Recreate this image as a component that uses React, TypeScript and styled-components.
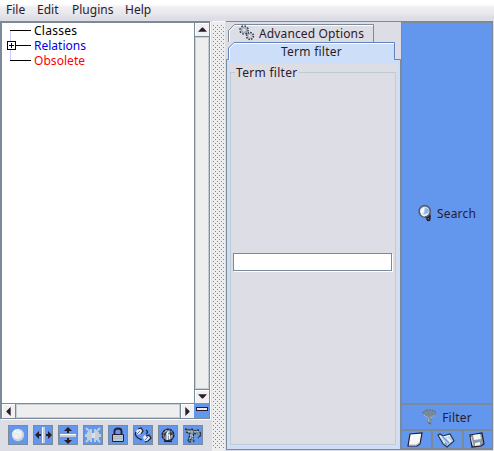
import React from "react";
import styled, { createGlobalStyle } from "styled-components";

const EDGE = "#7a8a99";
const BLUE = "#6396ed";
const INK = "#2b1b2b";
const PANEL = "#dddde6";

const Global = createGlobalStyle`
  *{box-sizing:border-box}
  body{margin:0;background:${PANEL};overflow:hidden;font:12px/15px "Noto Sans",sans-serif;color:${INK}}
  svg{display:block;flex:none}
`;
const Window = styled.div`
  width:494px;height:451px;display:flex;flex-direction:column;background:${PANEL};
`;
const MenuBar = styled.nav`
  height:21px;flex:none;display:flex;padding:2px 6px 0;
  background:linear-gradient(#fff 0,#fff 4px,#f0f0f2 7px,#ececee 10px,#e8e6ec 14px,${PANEL} 18px);
`;
const MenuItem = styled.span<{ $w: number }>`
  width:${p => p.$w}px;white-space:nowrap;
`;
const Body = styled.div`height:430px;display:flex;`;
const LeftColumn = styled.section`width:212px;display:flex;flex-direction:column;`;
const ScrollPane = styled.div`
  width:210px;height:398px;border:2px solid ${EDGE};border-width:2px 1px 1px 2px;
  display:grid;grid-template-columns:192px 15px;grid-template-rows:380px 15px;
  box-shadow:1px 1px #fff;
`;
const Tree = styled.ul`
  margin:0;padding:0 0 0 5px;list-style:none;background:#fff;
`;
const TreeRow = styled.li<{ $color: string }>`
  height:15px;display:flex;overflow:hidden;color:${p => p.$color};
`;
const TreeLabel = styled.span<{ $ls: number }>`letter-spacing:${p => p.$ls}px;`;
const ScrollBar = styled.div<{ $dir: "row" | "column" }>`
  display:flex;flex-direction:${p => p.$dir};background:#eee;
  border:solid ${EDGE};border-width:${p => p.$dir === "row" ? "1px 0 0 0" : "0 0 0 1px"};
`;
const ScrollButton = styled.div<{ $edge: string }>`
  flex:none;width:14px;height:14px;background:#f1f1f2;border:0 solid ${EDGE};
  border-${p => p.$edge}-width:1px;box-shadow:inset 1px 1px #fff;
  display:flex;align-items:center;justify-content:center;
`;
const Track = styled.div`flex:1;border:1px solid #c5cfd8;`;
const Corner = styled.div`
  background:${BLUE};display:flex;align-items:flex-start;justify-content:center;padding-top:4px;
`;
const ToolBar = styled.div`display:flex;gap:5px;padding:6px 0 0 8px;`;
const ToolButton = styled.div`
  width:20px;height:20px;border:1px solid ${EDGE};background:${BLUE};
`;
const Splitter = styled.div`
  width:13px;margin-right:1px;border-top:1px solid #f8f8f8;background:#eee;
`;
const Tabs = styled.section`
  width:175px;border-top:1px solid ${EDGE};display:flex;flex-direction:column;
`;
const TabRow = styled.div<{ $h: number }>`height:${p => p.$h}px;position:relative;flex:none;`;
const TabShape = styled.svg`position:absolute;left:0;top:0;`;
const TabText = styled.span<{ $x: number; $y: number; $ls: number }>`
  position:absolute;left:${p => p.$x}px;top:${p => p.$y}px;letter-spacing:${p => p.$ls}px;white-space:nowrap;
`;
const TabBody = styled.div`
  flex:1;margin-bottom:1px;background:#cddff8;
  border:solid ${EDGE};border-width:0 1px 1px 1px;padding:3px;display:flex;
`;
const TabPage = styled.div`flex:1;min-width:0;padding:2px 1px 1px 0;background:${PANEL};display:flex;`;
const FilterGroup = styled.fieldset`
  flex:1;min-width:0;margin:0;padding:0 3px;border:1px solid #c0cbd5;
`;
const Legend = styled.legend`
  margin-left:1px;padding:0 1px;height:15px;letter-spacing:.3px;
`;
const FilterInput = styled.input`
  display:block;width:159px;height:18px;margin:173px 0 0 -1px;border:1px solid ${EDGE};
  border-radius:0;background:#fff;box-shadow:1px 1px #fff;outline:0;
`;
const Actions = styled.section`
  width:92px;height:429px;border:solid ${EDGE};border-width:2px 1px 2px 1px;display:flex;flex-direction:column;
`;
const Action = styled.div<{ $h: number }>`
  height:${p => p.$h}px;flex:none;background:${BLUE};border-bottom:2px solid ${EDGE};
  display:flex;align-items:center;justify-content:center;gap:5px;letter-spacing:.2px;
`;
const FileRow = styled.div`flex:1;display:grid;grid-template-columns:29px 31px 30px;`;
const FileButton = styled.div`
  background:${BLUE};display:flex;align-items:center;justify-content:center;padding-right:3px;
  & + &{border-left:2px solid ${EDGE};}
`;

const Arrow = ({ turn }: { turn: number }) => (
  <svg width="9" height="9" viewBox="-4.5 -4.5 9 9"><path d="M-4.5 2.2L-.5-2H.5L4.5 2.2Z" fill={INK} transform={`rotate(${turn})`} /></svg>
);
const Branch = ({ first, last, box }: { first?: boolean; last?: boolean; box?: boolean }) => (
  <svg width="27" height="15" shapeRendering="crispEdges">
    <path d={`M3.5 ${first ? 7 : 0}V${last ? 8 : 15}`} stroke="#ccccff" />
    <path d="M3 7.5H24" stroke="#000" />
    {box && <><rect x=".5" y="3.5" width="8" height="8" fill="#fff" stroke="#000" /><path d="M2 7.5H7M4.5 5V10" stroke="#000" /></>}
  </svg>
);
const Grip = () => (
  <svg width="13" height="429" shapeRendering="crispEdges">
    <defs>
      <pattern id="grip" width="4" height="4" patternUnits="userSpaceOnUse">
        <path d="M3 1h1v1h-1zM1 3h1v1h-1z" fill={EDGE} />
      </pattern>
    </defs>
    <rect x="1" y="2" width="11" height="425" fill="url(#grip)" />
  </svg>
);
const Gears = () => (
  <svg width="16" height="16" viewBox="0 0 16 16" fill="none">
    <circle cx="5" cy="5" r="3.7" stroke="#303841" strokeWidth="2.2" strokeDasharray="1.5 1.4" />
    <circle cx="5" cy="5" r="2.6" stroke="#9eabb6" strokeWidth="1.7" />
    <circle cx="11" cy="11" r="3.1" stroke="#303841" strokeWidth="2.2" strokeDasharray="1.4 1" />
    <circle cx="11" cy="11" r="2" stroke="#b5c0ca" strokeWidth="1.3" />
  </svg>
);
const Magnifier = () => (
  <svg width="14" height="17" viewBox="0 0 14 17">
    <path d="M8 10.5H10.5V14" fill="none" stroke={INK} strokeWidth="4.4" strokeLinejoin="round" strokeLinecap="round" />
    <circle cx="6.7" cy="6.3" r="5.6" fill="#c6daee" stroke="#4d5b69" strokeWidth="1.5" />
    <path d="M2.5 7Q2.5 3 6.5 2.5V6L4 9Z" fill="#f8fcff" /><path d="M7 3L11 4.5L10 8L6 9Z" fill="#8ab5ef" />
    <path d="M3 9L6 11L10 9" fill="none" stroke="#eef6ff" strokeWidth="1.3" />
    <path d="M10 13L11 14.5" stroke="#8c98a4" />
  </svg>
);
const Funnel = () => (
  <svg width="15" height="16" viewBox="0 0 15 16">
    <path d="M1 4L6 9V14L9 15V9L14 4Z" fill="#8495a5" stroke="#75899d" />
    <ellipse cx="7.5" cy="4" rx="7" ry="3.4" fill="#788a99" />
    <path d="M1 4Q2 1 7.5 1T14 4" fill="none" stroke="#4b5965" strokeDasharray="1 1.5" />
    <path d="M2 6L6.5 9.5V14M12 6.5L9 9" fill="none" stroke="#b8c3cc" strokeDasharray="1.5 .8" />
    <path d="M6 13.5L9 15" stroke="#56636f" />
  </svg>
);
const toolIcons = [
  <><circle cx="9" cy="9" r="6.2" fill="#cbd2d9" /><circle cx="8.3" cy="8.3" r="5" fill="#e9edef" /><path d="M5 5h2v1H5m4 0h2v1H9m-3 3h2v1H6" fill="#fff" /></>,
  <><path d="M8 1h3v16H8z" fill="#c5cfd8" /><path d="M8 1h1v16H8z" fill="#fff" /><path d="M1 9L5 5V8H7V10H5V13ZM18 9L14 5V8H12V10H14V13Z" fill={INK} /></>,
  <><path d="M1 8h16v3H1z" fill="#c5cfd8" /><path d="M1 8h16v1H1z" fill="#fff" /><path d="M9 1L13 5H10V7H8V5H5ZM9 18L13 14H10V12H8V14H5Z" fill={INK} /></>,
  <><path d="M1 8h16v3H1z" fill="#c5cfd8" /><path d="M2 2L7 7M16 2L11 7M2 16L7 11M16 16L11 11M7 3V7H3M11 3V7H15M3 12H7V16M15 12H11V16" fill="none" stroke="#bfcfdf" strokeWidth="2" /><path d="M8 7h3v5H8z" fill="#dce3ea" /></>,
  <><path d="M5.5 8V5Q5.5 2.5 9 2.5T12.5 5V8" fill="none" stroke={INK} strokeWidth="1.8" /><path d="M3.5 8.5h11v7h-11z" fill="#bdcbd5" stroke={INK} /><path d="M4 10.5H14M4 12.5H14" stroke="#a9b8c4" /></>,
  <><path d="M2 5L5 2L9 4L8 8L5 8L3 9Z" fill="#e4edf5" /><path d="M9 11L11 9L13 11L16 10V14L13 16L10 14Z" fill="#e4edf5" /><path d="M2 6Q0 9 4 12L8 14M4 3L7 2L9 5L7 8M12 4Q15 6 12 8M12 10L15 9L17 12L14 15L11 16" fill="none" stroke={INK} strokeWidth="1.3" /><path d="M3 8L6 5M11 14L14 11" stroke="#587a9f" /></>,
  <><circle cx="9" cy="9" r="5.8" fill="#7c8e9d" stroke={INK} strokeWidth="1.4" strokeDasharray="3 .5" /><path d="M4.5 8L8 5L7 9L5 11ZM11 5L14 8L11 11Z" fill="#34424f" /><path d="M6 5.5L8 4.5M12 11L13 9" stroke="#bec9d1" /><path d="M8.2 14V8H7M8.2 8Q8.2 5.5 10.5 6M8.2 9H11M10.5 9V13" fill="none" stroke="#fff" strokeWidth="1.2" /><path d="M5 15.3H13" stroke={INK} strokeWidth="1.5" /></>,
  <><path d="M1 2L7 3L10 4L15 4L17 8L15 11L13 8L10 7L9 11L10 16L7 14L6 16L3 15L6 8L2 6Z" fill="#7b8b98" /><path d="M1 3L5 4L8 3L10 5L15 4M16 6L17 9L14 12M12 8L10 7L9 11L10 16M7 12L6 16L4 15L6 8L2 6" fill="none" stroke="#24303a" strokeWidth="1.3" strokeDasharray="2.5 .7" /><path d="M4 5L8 6L14 5.5M7 8L6 14M8 9L9 13" fill="none" stroke="#d0dae2" strokeDasharray="2 1" /></>,
];

export default function App() {
  return (
    <>
      <Global />
      <Window>
        <MenuBar>
          <MenuItem $w={31}>File</MenuItem><MenuItem $w={35}>Edit</MenuItem>
          <MenuItem $w={53}>Plugins</MenuItem><MenuItem $w={35}>Help</MenuItem>
        </MenuBar>
        <Body>
          <LeftColumn>
            <ScrollPane>
              <Tree>
                <TreeRow $color="#000"><Branch first /><TreeLabel $ls={0.25}>Classes</TreeLabel></TreeRow>
                <TreeRow $color="#0000ee"><Branch box /><TreeLabel $ls={0}>Relations</TreeLabel></TreeRow>
                <TreeRow $color="#f00"><Branch last /><TreeLabel $ls={0.05}>Obsolete</TreeLabel></TreeRow>
              </Tree>
              <ScrollBar $dir="column"><ScrollButton $edge="bottom"><Arrow turn={0} /></ScrollButton><Track /><ScrollButton $edge="top"><Arrow turn={180} /></ScrollButton></ScrollBar>
              <ScrollBar $dir="row"><ScrollButton $edge="right"><Arrow turn={-90} /></ScrollButton><Track /><ScrollButton $edge="left"><Arrow turn={90} /></ScrollButton></ScrollBar>
              <Corner><svg width="12" height="4" shapeRendering="crispEdges"><rect x=".5" y=".5" width="11" height="3" fill="#eee" stroke={INK} /></svg></Corner>
            </ScrollPane>
            <ToolBar>{toolIcons.map((icon, i) => <ToolButton key={i}><svg width="18" height="18">{icon}</svg></ToolButton>)}</ToolBar>
          </LeftColumn>
          <Splitter><Grip /></Splitter>
          <Tabs>
            <TabRow $h={20}>
              <TabShape width="175" height="20"><path d="M2.5 20V8.5L8.5 2.5H147.5V20" fill={PANEL} stroke={EDGE} /><path d="M3.5 20V9L9 3.5H147" fill="none" stroke="#fff" /></TabShape>
              <TabText $x={13} $y={3} $ls={0}><Gears /></TabText>
              <TabText $x={33} $y={4} $ls={0.13}>Advanced Options</TabText>
            </TabRow>
            <TabRow $h={18}>
              <TabShape width="175" height="18"><path d="M.5 18.5V17.5H2.5V6L8 .5H168.5V17.5H174.5V19" fill="#cddff8" stroke="#6382bf" /><path d="M3.5 18V6.5L8.5 1.5H168" fill="none" stroke="#fff" /></TabShape>
              <TabText $x={55} $y={2} $ls={0.25}>Term filter</TabText>
            </TabRow>
            <TabBody>
              <TabPage><FilterGroup><Legend>Term filter</Legend><FilterInput aria-label="Term filter" /></FilterGroup></TabPage>
            </TabBody>
          </Tabs>
          <Actions>
            <Action $h={382}><Magnifier />Search</Action>
            <Action $h={26}><Funnel />Filter</Action>
            <FileRow>
              <FileButton><svg width="18" height="16"><path d="M4 2L16 1L14 12L11 14L2 14L3 8Z" fill="#f7f8f9" stroke={INK} strokeWidth="1.2" /><path d="M3 13L10 13L13 11" fill="none" stroke="#aebbc5" /></svg></FileButton>
              <FileButton><svg width="18" height="16"><path d="M1 3L3 2L6 4L13 2L17 9L10 15L6 12Z" fill="#bcd3ee" stroke="#27313b" strokeWidth="1.1" /><path d="M4 6L10 13M6 5L12 11" stroke="#699be0" strokeWidth="1.4" /><path d="M7 5L13 3.5M10 6L14 10M3 4L8 11" stroke="#f4f9ff" strokeWidth="1.2" /></svg></FileButton>
              <FileButton><svg width="18" height="16"><path d="M2 3L14 1L16 12L13 14L4 15Z" fill="#8b9ba8" stroke={INK} strokeWidth="1.2" /><path d="M5 3L12 2L13 7L6 8ZM7 11L12 10V13L7 14Z" fill="#f3f5f6" /><path d="M3 5L5 13" stroke="#d4dce2" /></svg></FileButton>
            </FileRow>
          </Actions>
        </Body>
      </Window>
    </>
  );
}
